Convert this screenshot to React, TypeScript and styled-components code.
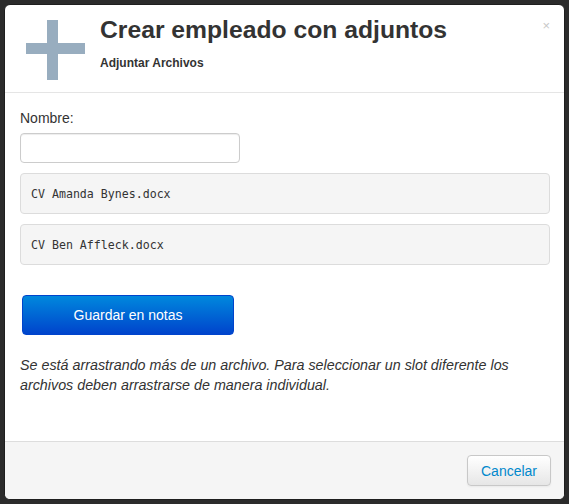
import React from 'react';
import styled, { createGlobalStyle } from 'styled-components';

// --- Global ---

const GlobalStyle = createGlobalStyle`
  html, body {
    margin: 0;
    padding: 0;
    background: #2b2b2b;
  }
  body {
    font-family: "Liberation Sans", Arial, Helvetica, sans-serif;
    font-size: 14px;
    color: #333;
  }
`;

const Backdrop = styled.div`
  width: 569px;
  height: 504px;
  box-sizing: border-box;
  padding: 4px 4px 0 4px;
  background: #2b2b2b;
  overflow: hidden;
`;

const Modal = styled.div`
  width: 561px;
  height: 496px;
  box-sizing: border-box;
  background: #fff;
  border: 1px solid #1e1e1e;
  border-radius: 6px;
  display: flex;
  flex-direction: column;
  overflow: hidden;
`;

// --- Header ---

const Header = styled.div`
  position: relative;
  display: flex;
  align-items: flex-start;
  gap: 14px;
  height: 88px;
  box-sizing: border-box;
  padding: 15px 20px 0 20px;
  border-bottom: 1px solid #e5e5e5;
`;

const PlusIcon = styled.svg`
  flex-shrink: 0;
  width: 61px;
  height: 61px;
`;

const TitleBlock = styled.div`
  display: flex;
  flex-direction: column;
  margin-top: -5px;
`;

const Title = styled.h3`
  margin: 0;
  font-size: 24.7px;
  line-height: 30px;
  font-weight: 700;
  color: #333;
`;

const Subtitle = styled.div`
  margin-top: 11px;
  font-size: 12px;
  font-weight: 700;
  line-height: 14px;
  color: #333;
`;

const Close = styled.span`
  position: absolute;
  top: 14px;
  right: 14px;
  font-size: 13px;
  line-height: 13px;
  color: #c8c8c8;
  cursor: pointer;
`;

// --- Body ---

const Body = styled.div`
  flex: 1;
  padding: 16px 14px 0 15px;
  display: flex;
  flex-direction: column;
`;

const Label = styled.label`
  font-size: 14px;
  line-height: 18px;
  color: #333;
  margin-bottom: 6px;
`;

const Input = styled.input`
  width: 220px;
  height: 30px;
  box-sizing: border-box;
  border: 1px solid #ccc;
  border-radius: 4px;
  box-shadow: inset 0 1px 1px rgba(0, 0, 0, 0.075);
  margin-bottom: 10px;
`;

const FileSlot = styled.div`
  height: 41px;
  box-sizing: border-box;
  background: #f5f5f5;
  border: 1px solid #dcdcdc;
  border-radius: 4px;
  padding: 0 10px;
  display: flex;
  align-items: center;
  font-family: "DejaVu Sans Mono", "Liberation Mono", monospace;
  font-size: 11.6px;
  color: #333;
  margin-bottom: 10px;
`;

const PrimaryButton = styled.button`
  margin: 20px 0 0 2px;
  width: 212px;
  height: 40px;
  border: 1px solid #0044cc;
  border-radius: 4px;
  background: linear-gradient(to bottom, #0088dd, #0044cc);
  color: #fff;
  font-family: "Liberation Sans", Arial, sans-serif;
  font-size: 14px;
  cursor: pointer;
`;

const Notice = styled.p`
  margin: 20px 0 0 0;
  font-size: 14.3px;
  line-height: 20px;
  font-style: italic;
  color: #333;
`;

// --- Footer ---

const Footer = styled.div`
  height: 58px;
  box-sizing: border-box;
  background: #f5f5f5;
  border-top: 1px solid #dddddd;
  display: flex;
  justify-content: flex-end;
  align-items: center;
  padding: 0 13px 0 15px;
`;

const CancelButton = styled.button`
  width: 84px;
  height: 31px;
  border: 1px solid #c8c8c8;
  border-radius: 4px;
  background: linear-gradient(to bottom, #ffffff, #e6e6e6);
  color: #0088cc;
  font-family: "Liberation Sans", Arial, sans-serif;
  font-size: 14px;
  box-shadow: inset 0 1px 0 rgba(255, 255, 255, 0.2), 0 1px 2px rgba(0, 0, 0, 0.05);
  cursor: pointer;
`;

const files = ['CV Amanda Bynes.docx', 'CV Ben Affleck.docx'];

const App: React.FC = () => {
  return (
    <>
      <GlobalStyle />
      <Backdrop>
        <Modal>
          <Header>
            <PlusIcon viewBox="0 0 61 61" aria-hidden="true">
              <rect x="22" y="0" width="11" height="60" fill="#98adbf" />
              <rect x="1" y="23" width="59" height="11" fill="#98adbf" />
            </PlusIcon>
            <TitleBlock>
              <Title>Crear empleado con adjuntos</Title>
              <Subtitle>Adjuntar Archivos</Subtitle>
            </TitleBlock>
            <Close>×</Close>
          </Header>

          <Body>
            <Label>Nombre:</Label>
            <Input type="text" />
            {files.map((f) => (
              <FileSlot key={f}>{f}</FileSlot>
            ))}
            <PrimaryButton>Guardar en notas</PrimaryButton>
            <Notice>
              Se está arrastrando más de un archivo. Para seleccionar un slot diferente los
              archivos deben arrastrarse de manera individual.
            </Notice>
          </Body>

          <Footer>
            <CancelButton>Cancelar</CancelButton>
          </Footer>
        </Modal>
      </Backdrop>
    </>
  );
};

export default App;
